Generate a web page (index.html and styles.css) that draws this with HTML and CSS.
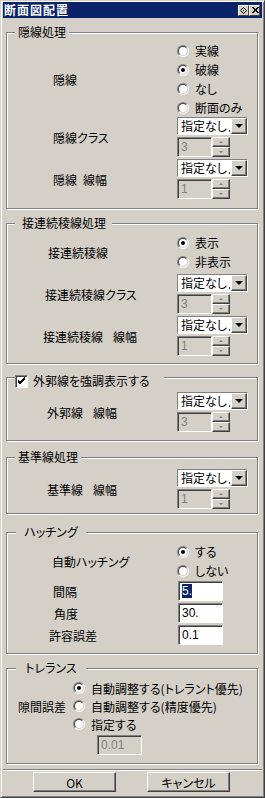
FILE: index.html
```html
<!DOCTYPE html>
<html lang="ja">
<head>
    <meta charset="UTF-8">
    <title>断面図配置</title>
    <link rel="stylesheet" href="styles.css">
</head>
<body>
<div class="window">
    <div class="titlebar">
        <span class="title">断面図配置</span>
        <div class="tb-buttons">
            <span class="tb-btn">
                <svg width="7" height="7" viewBox="0 0 7 7"><path d="M3.5 0.5 L6.5 3.5 L3.5 6.5 L0.5 3.5 Z" fill="none" stroke="#000" stroke-width="1"/><rect x="3" y="3" width="1" height="1" fill="#000"/></svg>
            </span>
            <span class="tb-btn">
                <svg width="8" height="7" viewBox="0 0 8 7"><path d="M1 0 L7 6 M2 0 L8 6 M7 0 L1 6 M8 0 L2 6" stroke="#000" stroke-width="1" shape-rendering="crispEdges"/></svg>
            </span>
        </div>
    </div>

    <div class="client">
        <!-- 隠線処理 -->
        <div class="group g1">
            <span class="group-title t1">隠線処理</span>
            <div class="row">
                <div class="lbl l53">隠線</div>
                <div class="radios">
                    <label class="radio"><span class="rb"></span>実線</label>
                    <label class="radio"><span class="rb on"></span>破線</label>
                    <label class="radio"><span class="rb"></span>なし</label>
                    <label class="radio"><span class="rb"></span>断面のみ</label>
                </div>
            </div>
            <div class="row pair">
                <div class="lbl l53">隠線クラス</div>
                <div class="stack">
                    <div class="combo"><span class="combo-text">指定なし</span><span class="combo-btn"><i class="arrow"></i></span></div>
                    <div class="spin"><span class="spin-field">3</span><span class="spin-btns"><span class="sb"><i class="up"></i></span><span class="sb"><i class="down"></i></span></span></div>
                </div>
            </div>
            <div class="row pair">
                <div class="lbl l53">隠線<span class="sp short"></span>線幅</div>
                <div class="stack">
                    <div class="combo"><span class="combo-text">指定なし</span><span class="combo-btn"><i class="arrow"></i></span></div>
                    <div class="spin"><span class="spin-field">1</span><span class="spin-btns"><span class="sb"><i class="up"></i></span><span class="sb"><i class="down"></i></span></span></div>
                </div>
            </div>
        </div>

        <!-- 接連続稜線処理 -->
        <div class="group g2">
            <span class="group-title t2">接連続稜線処理</span>
            <div class="row">
                <div class="lbl l48">接連続稜線</div>
                <div class="radios">
                    <label class="radio"><span class="rb on"></span>表示</label>
                    <label class="radio"><span class="rb"></span>非表示</label>
                </div>
            </div>
            <div class="row pair">
                <div class="lbl l45">接連続稜線クラス</div>
                <div class="stack">
                    <div class="combo"><span class="combo-text">指定なし</span><span class="combo-btn"><i class="arrow"></i></span></div>
                    <div class="spin"><span class="spin-field">3</span><span class="spin-btns"><span class="sb"><i class="up"></i></span><span class="sb"><i class="down"></i></span></span></div>
                </div>
            </div>
            <div class="row pair">
                <div class="lbl l43">接連続稜線<span class="sp"></span>線幅</div>
                <div class="stack">
                    <div class="combo"><span class="combo-text">指定なし</span><span class="combo-btn"><i class="arrow"></i></span></div>
                    <div class="spin"><span class="spin-field">1</span><span class="spin-btns"><span class="sb"><i class="up"></i></span><span class="sb"><i class="down"></i></span></span></div>
                </div>
            </div>
        </div>

        <!-- 外郭線 -->
        <div class="group g3">
            <span class="group-title t3"><span class="check"><svg width="9" height="9" viewBox="0 0 9 9"><path d="M1 3 L3 5 L8 0 M1 4 L3 6 L8 1 M1 5 L3 7 L8 2" fill="none" stroke="#000" stroke-width="1"/></svg></span>外郭線を強調表示する</span>
            <div class="row pair">
                <div class="lbl l47">外郭線<span class="sp"></span>線幅</div>
                <div class="stack">
                    <div class="combo"><span class="combo-text">指定なし</span><span class="combo-btn"><i class="arrow"></i></span></div>
                    <div class="spin"><span class="spin-field">3</span><span class="spin-btns"><span class="sb"><i class="up"></i></span><span class="sb"><i class="down"></i></span></span></div>
                </div>
            </div>
        </div>

        <!-- 基準線処理 -->
        <div class="group g4">
            <span class="group-title t4">基準線処理</span>
            <div class="row pair">
                <div class="lbl l47">基準線<span class="sp"></span>線幅</div>
                <div class="stack">
                    <div class="combo"><span class="combo-text">指定なし</span><span class="combo-btn"><i class="arrow"></i></span></div>
                    <div class="spin"><span class="spin-field">1</span><span class="spin-btns"><span class="sb"><i class="up"></i></span><span class="sb"><i class="down"></i></span></span></div>
                </div>
            </div>
        </div>

        <!-- ハッチング -->
        <div class="group g5">
            <span class="group-title t5">ハッチング</span>
            <div class="row">
                <div class="lbl l52">自動ハッチング</div>
                <div class="radios">
                    <label class="radio"><span class="rb on"></span>する</label>
                    <label class="radio"><span class="rb"></span>しない</label>
                </div>
            </div>
            <div class="row field">
                <div class="lbl l53">間隔</div>
                <div class="edit"><span class="sel">5.</span></div>
            </div>
            <div class="row field">
                <div class="lbl l54">角度</div>
                <div class="edit">30.</div>
            </div>
            <div class="row field">
                <div class="lbl l49">許容誤差</div>
                <div class="edit">0.1</div>
            </div>
        </div>

        <!-- トレランス -->
        <div class="group g6">
            <span class="group-title t5">トレランス</span>
            <div class="tol">
                <div class="lbl tol-lbl">隙間誤差</div>
                <div class="radios tight">
                    <label class="radio"><span class="rb on"></span>自動調整する(トレラント優先)</label>
                    <label class="radio"><span class="rb"></span>自動調整する(精度優先)</label>
                    <label class="radio"><span class="rb"></span>指定する</label>
                </div>
                <div class="edit off tol-edit">0.01</div>
            </div>
        </div>

        <div class="footer">
            <button class="btn">OK</button>
            <button class="btn">キャンセル</button>
        </div>
    </div>
</div>
</body>
</html>
```

FILE: styles.css
```css
* {
    box-sizing: border-box;
}

body {
    margin: 0;
    background: #d4d0c8;
    font-family: "Noto Sans CJK JP", "DejaVu Sans", sans-serif;
    font-size: 12px;
    font-feature-settings: "palt";
    color: #000;
}

.window {
    width: 265px;
    height: 798px;
    background: #d4d0c8;
    border: 1px solid;
    border-color: #d4d0c8 #404040 #404040 #d4d0c8;
    box-shadow: inset 1px 1px #fff, inset -1px -1px #808080;
    padding: 1px 2px 0 2px;
    overflow: hidden;
}

.titlebar {
    height: 16px;
    background: #0a246a;
    color: #fff;
    font-weight: bold;
    letter-spacing: 1px;
    display: flex;
    align-items: center;
    justify-content: space-between;
    padding: 0 2px 0 1px;
    line-height: 16px;
}

.tb-buttons {
    display: flex;
}

.tb-btn {
    width: 11px;
    height: 11px;
    background: #d4d0c8;
    border: 1px solid;
    border-color: #fff #404040 #404040 #fff;
    display: flex;
    align-items: center;
    justify-content: center;
}

.tb-btn svg {
    display: block;
}

.client {
    padding: 0 4px 0 3px;
}

/* group boxes */
.group {
    position: relative;
    border: 1px solid #808080;
    box-shadow: inset 1px 1px #fff, 1px 1px #fff;
    display: flex;
    flex-direction: column;
}

.g1 { margin-top: 14px; padding: 8px 0 9px; }
.g2 { margin-top: 14px; padding: 9px 0 7px; }
.g3 { margin-top: 13px; padding: 14px 0 8px; }
.g4 { margin-top: 16px; padding: 11px 0 4px; }
.g5 { margin-top: 18px; padding: 9px 0 8px; }
.g6 { margin-top: 14px; padding: 10px 0 8px; }

.group-title {
    position: absolute;
    top: -8px;
    left: 8px;
    height: 14px;
    line-height: 14px;
    background: #d4d0c8;
    padding: 0 3px;
    white-space: nowrap;
}

.t2 { padding: 0 6px 0 7px; }
.t3 { top: -4px; padding: 0 14px 0 0; display: flex; align-items: center; }
.t5 { left: 9px; width: 70px; text-align: center; }

.row {
    display: grid;
    grid-template-columns: 170px auto;
    align-items: center;
}

.pair + .pair { margin-top: 2px; }
.g2 .pair:nth-child(3) { margin-top: 3px; }
.field { margin-top: 2px; }
.g5 .field:nth-child(3) { margin-top: 1px; }

.lbl {
    white-space: nowrap;
}

.l43 { padding-left: 36px; }
.l45 { padding-left: 38px; }
.l47 { padding-left: 40px; }
.l48 { padding-left: 41px; }
.l49 { padding-left: 42px; }
.l52 { padding-left: 45px; }
.l53 { padding-left: 46px; }
.l54 { padding-left: 47px; }

.sp {
    display: inline-block;
    width: 10px;
}

.sp.short { width: 6px; }

/* radio buttons */
.radios {
    display: flex;
    flex-direction: column;
}

.radio {
    height: 19px;
    display: flex;
    align-items: center;
    gap: 6px;
    white-space: nowrap;
}

.tight .radio { height: 18px; }

.rb {
    position: relative;
    width: 12px;
    height: 12px;
    border-radius: 50%;
    border: 1px solid;
    border-color: #808080 #fff #fff #808080;
    flex: none;
}

.rb::before {
    content: "";
    position: absolute;
    inset: 0;
    border-radius: 50%;
    border: 1px solid;
    border-color: #404040 #d4d0c8 #d4d0c8 #404040;
    background: #fff;
}

.rb.on::after {
    content: "";
    position: absolute;
    left: 3px;
    top: 3px;
    width: 4px;
    height: 4px;
    border-radius: 50%;
    background: #000;
}

/* combo + spinner */
.stack {
    display: flex;
    flex-direction: column;
    gap: 2px;
}

.combo {
    width: 71px;
    height: 18px;
    display: flex;
    border: 1px solid;
    border-color: #808080 #fff #fff #808080;
    background: #fff;
}

.combo-text {
    position: relative;
    flex: 1;
    padding-left: 3px;
    line-height: 16px;
}

.combo-text::after {
    content: "";
    position: absolute;
    right: 1px;
    bottom: 2px;
    width: 1px;
    height: 2px;
    background: #404040;
}

.combo-btn {
    width: 16px;
    background: #d4d0c8;
    border: 1px solid;
    border-color: #fff #404040 #404040 #fff;
    box-shadow: inset -1px -1px #808080;
    display: flex;
    align-items: center;
    justify-content: center;
}

.arrow {
    width: 0;
    height: 0;
    border-left: 4px solid transparent;
    border-right: 4px solid transparent;
    border-top: 4px solid #000;
}

.spin {
    display: flex;
    width: 53px;
    height: 20px;
}

.spin-field {
    width: 35px;
    border: 1px solid;
    border-color: #808080 #fff #fff #808080;
    box-shadow: inset 1px 1px #404040;
    color: #808080;
    padding-left: 3px;
    line-height: 18px;
    font-family: "Liberation Sans", sans-serif;
}

.spin-btns {
    width: 18px;
    display: flex;
    flex-direction: column;
}

.sb {
    flex: 1;
    background: #d4d0c8;
    border: 1px solid;
    border-color: #fff #404040 #404040 #fff;
    box-shadow: inset -1px -1px #808080;
    display: flex;
    align-items: center;
    justify-content: center;
}

.up, .down {
    width: 0;
    height: 0;
    border-left: 2px solid transparent;
    border-right: 2px solid transparent;
}

.up { border-bottom: 2px solid #808080; }
.down { border-top: 2px solid #808080; }

/* edit boxes */
.edit {
    width: 45px;
    height: 20px;
    background: #fff;
    border: 1px solid;
    border-color: #808080 #fff #fff #808080;
    box-shadow: inset 1px 1px #404040;
    padding-left: 3px;
    line-height: 18px;
    margin-left: 1px;
    font-family: "Liberation Sans", sans-serif;
}

.edit.off {
    background: #d4d0c8;
    color: #808080;
}

.sel {
    background: #0a246a;
    color: #fff;
}

/* checkbox */
.check {
    width: 13px;
    height: 13px;
    margin-right: 5px;
    background: #fff;
    border: 1px solid;
    border-color: #808080 #fff #fff #808080;
    box-shadow: inset 1px 1px #404040;
    display: flex;
    align-items: center;
    justify-content: center;
}

/* tolerance */
.tol {
    display: grid;
    grid-template-columns: 66px auto;
    align-items: center;
    row-gap: 2px;
}

.tol-lbl {
    padding-left: 11px;
}

.tol-edit {
    grid-column: 2;
    margin-left: 24px;
}

/* bottom buttons */
.footer {
    margin: 5px -4px 0 -3px;
    border-top: 1px solid #808080;
    box-shadow: inset 0 1px #fff;
    display: flex;
    gap: 31px;
    padding: 2px 0 0 30px;
}

.btn {
    width: 83px;
    height: 20px;
    padding: 0;
    font: inherit;
    background: #d4d0c8;
    border: 1px solid;
    border-color: #fff #404040 #404040 #fff;
    box-shadow: inset -1px -1px #808080;
    color: #000;
}
```
